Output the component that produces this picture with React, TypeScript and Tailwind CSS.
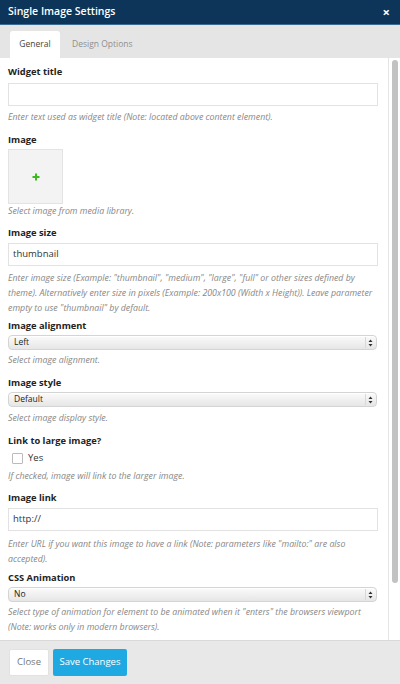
import { useState } from 'react';

function Label({ children }: { children: React.ReactNode }) {
  return <div className="text-[9.3px] font-bold text-[#222] leading-[14px]">{children}</div>;
}

function Help({ children }: { children: React.ReactNode }) {
  return <div className="text-[8.8px] italic text-[#878787] leading-[15px]">{children}</div>;
}

function TextInput({ value }: { value: string }) {
  return (
    <div className="h-[23px] border border-[#e2e2e2] bg-white px-[4px] flex items-center text-[9.5px] text-[#333]">
      {value}
    </div>
  );
}

function SelectBox({ value }: { value: string }) {
  return (
    <div className="h-[15px] rounded-[4px] border border-[#d4d4d4] bg-gradient-to-b from-[#fbfbfb] to-[#e6e6e6] flex items-center justify-between pl-[5px] pr-[3px] text-[8.5px] text-[#222] shadow-[inset_0_1px_0_#fff]">
      <span>{value}</span>
      <span className="flex h-[11px] w-[8px] items-center justify-center border-l border-[#d8d8d8] pl-[2px]">
        <svg width="5" height="8" viewBox="0 0 5 8">
          <path d="M2.5 0.5L4.5 3H0.5z M2.5 7.5L4.5 5H0.5z" fill="#333" />
        </svg>
      </span>
    </div>
  );
}

export default function App() {
  const [checked, setChecked] = useState(false);
  return (
    <div className="w-[400px] h-[684px] flex flex-col bg-white overflow-hidden" style={{ fontFamily: '"Open Sans", "Liberation Sans", sans-serif' }}>
      <div className="h-[25px] shrink-0 bg-[#0d3459] border-b border-[#3a6b94] flex items-center justify-between pl-[8px] pr-[10px]">
        <span className="text-[10.5px] font-semibold text-white">Single Image Settings</span>
        <span className="text-[13px] font-bold text-white leading-none">×</span>
      </div>

      <div className="h-[33px] shrink-0 bg-[#e5e5e5] flex items-end pl-[10px]">
        <div className="h-[27px] w-[50px] bg-white rounded-t-[3px] flex items-center justify-center text-[8.5px] text-[#444]">General</div>
        <div className="h-[27px] px-[12px] flex items-center text-[8.5px] text-[#8f8f8f]">Design Options</div>
      </div>

      <div className="flex-1 flex min-h-0">
        <div className="flex-1 pl-[8px] pr-[10px] pt-[7px]">
          <Label>Widget title</Label>
          <div className="mt-[4px]"><TextInput value="" /></div>
          <div className="mt-[4px]"><Help>Enter text used as widget title (Note: located above content element).</Help></div>

          <div className="mt-[8px]"><Label>Image</Label></div>
          <div className="mt-[2px] h-[55px] w-[55px] border border-[#e3e3e3] bg-[#f3f3f3] flex items-center justify-center">
            <svg width="8" height="8" viewBox="0 0 8 8">
              <path d="M3 0.5h2v2.5h2.5v2h-2.5v2.5h-2v-2.5h-2.5v-2h2.5z" fill="#3dbb1e" />
            </svg>
          </div>
          <Help>Select image from media library.</Help>

          <div className="mt-[7px]"><Label>Image size</Label></div>
          <div className="mt-[3px]"><TextInput value="thumbnail" /></div>
          <div className="mt-[5px]"><Help>Enter image size (Example: "thumbnail", "medium", "large", "full" or other sizes defined by theme). Alternatively enter size in pixels (Example: 200x100 (Width x Height)). Leave parameter empty to use "thumbnail" by default.</Help></div>

          <div className="mt-[3px]"><Label>Image alignment</Label></div>
          <div className="mt-[2px] pr-[1px]"><SelectBox value="Left" /></div>
          <div className="mt-[3px]"><Help>Select image alignment.</Help></div>

          <div className="mt-[8px]"><Label>Image style</Label></div>
          <div className="mt-[2px] pr-[1px]"><SelectBox value="Default" /></div>
          <div className="mt-[4px]"><Help>Select image display style.</Help></div>

          <div className="mt-[8px]"><Label>Link to large image?</Label></div>
          <label className="mt-[5px] ml-[4px] h-[11px] flex items-center gap-[5px] text-[9.5px] text-[#333]">
            <input type="checkbox" checked={checked} onChange={(e) => setChecked(e.target.checked)} className="appearance-none h-[11px] w-[11px] border border-[#bbb] rounded-[1px] bg-white" />
            Yes
          </label>
          <div className="mt-[5px]"><Help>If checked, image will link to the larger image.</Help></div>

          <div className="mt-[7px]"><Label>Image link</Label></div>
          <div className="mt-[3px]"><TextInput value="http://" /></div>
          <div className="mt-[6px]"><Help>Enter URL if you want this image to have a link (Note: parameters like "mailto:" are also accepted).</Help></div>

          <div className="mt-[4px]"><Label>CSS Animation</Label></div>
          <div className="mt-[2px] pr-[1px]"><SelectBox value="No" /></div>
          <div className="mt-[3px]"><Help>Select type of animation for element to be animated when it "enters" the browsers viewport (Note: works only in modern browsers).</Help></div>
        </div>
        <div className="w-[12px] shrink-0 border-l border-[#e4e4e4] bg-white pt-[2px] pl-[3px]">
          <div className="h-[523px] w-[6px] rounded-full bg-[#c2c2c2]" />
        </div>
      </div>

      <div className="h-[44px] shrink-0 bg-[#e8e8e8] border-t border-[#d9d9d9] flex items-center gap-[4px] pl-[9px]">
        <button className="h-[27px] w-[40px] bg-white border border-[#e2e2e2] rounded-[2px] text-[9.5px] text-[#777]">Close</button>
        <button className="h-[27px] w-[74px] bg-[#1fa9e3] rounded-[2px] text-[9.5px] text-white">Save Changes</button>
      </div>
    </div>
  );
}
